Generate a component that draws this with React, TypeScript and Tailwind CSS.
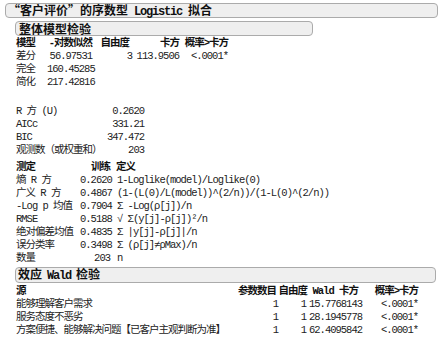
const cjk = "font-['Noto_Sans_CJK_SC',sans-serif]";

const Bar = ({ className, children }: { className: string; children: React.ReactNode }) => (
  <div
    className={`flex items-center border border-[#ababab] rounded-[4px] bg-[#efefef] text-[#111] font-bold ${className}`}
  >
    {children}
  </div>
);

const fitRows = [
  ["差分", "56.97531", "3", "113.9506", "<.0001*"],
  ["完全", "160.45285", "", "", ""],
  ["简化", "217.42816", "", "", ""],
];

const statRows = [
  ["R 方 (U)", "0.2620"],
  ["AICc", "331.21"],
  ["BIC", "347.472"],
  ["观测数（或权重和）", "203"],
];

const measureRows = [
  ["熵 R 方", "0.2620", "1-Loglike(model)/Loglike(0)"],
  ["广义 R 方", "0.4867", "(1-(L(0)/L(model))^(2/n))/(1-L(0)^(2/n))"],
  ["-Log p 均值", "0.7904", "Σ -Log(ρ[j])/n"],
  ["RMSE", "0.5188", "√ Σ(y[j]-ρ[j])²/n"],
  ["绝对偏差均值", "0.4835", "Σ |y[j]-ρ[j]|/n"],
  ["误分类率", "0.3498", "Σ (ρ[j]≠ρMax)/n"],
  ["数量", "203", "n"],
];

const waldRows = [
  ["能够理解客户需求", "1", "1", "15.7768143", "<.0001*"],
  ["服务态度不恶劣", "1", "1", "28.1945778", "<.0001*"],
  ["方案便捷、能够解决问题【已客户主观判断为准】", "1", "1", "62.4095842", "<.0001*"],
];

const head = "font-bold text-[#111]";

export default function App() {
  return (
    <div className="w-[443px] h-[344px] bg-white overflow-hidden text-[#222] font-['Liberation_Mono','Noto_Sans_CJK_SC',monospace] text-[10.5px] tracking-[-1px] leading-[13px]">
      <div className="pt-[3px] pl-[5px]">
        <Bar className="w-[433px] h-[15px] pl-[2px] tracking-normal">
          <span className={`${cjk} text-[12px] leading-[13px]`}>
            “客户评价”的序数型
            <span className="font-['Liberation_Mono'] text-[12px] tracking-[-1.2px] mx-[6px]">Logistic</span>
            拟合
          </span>
        </Bar>

        <div className="pl-[10px]">
          <Bar className={`mt-[3px] w-[298px] h-[15px] pl-[3px] ${cjk} text-[12px] tracking-normal`}>
            整体模型检验
          </Bar>

          <div className="mt-[1px] pl-[1px] grid grid-cols-[31px_45px_42px_45px_49px] whitespace-nowrap">
            <div className={head}>模型</div>
            <div className={`${head} text-right`}>-对数似然</div>
            <div className={`${head} text-right pr-[5px]`}>自由度</div>
            <div className={`${head} text-right`}>卡方</div>
            <div className={`${head} text-right`}>概率&gt;卡方</div>
            {fitRows.map((r, i) =>
              r.map((c, j) => (
                <div
                  key={`${i}-${j}`}
                  className={j === 0 ? "" : j === 2 ? "text-right pr-[2px]" : "text-right"}
                >
                  {c}
                </div>
              ))
            )}
          </div>

          <div className="mt-[16px] pl-[1px] grid grid-cols-[88px_40px] whitespace-nowrap">
            {statRows.map((r, i) => (
              <div key={i} className="contents">
                <div>{r[0]}</div>
                <div className="text-right">{r[1]}</div>
              </div>
            ))}
          </div>

          <div className="mt-[4px] pl-[1px] grid grid-cols-[64px_30px_auto] whitespace-nowrap">
            <div className={head}>测定</div>
            <div className={`${head} text-right`}>训练</div>
            <div className={`${head} pl-[6px]`}>定义</div>
            {measureRows.map((r, i) => (
              <div key={i} className="contents">
                <div>{r[0]}</div>
                <div className="text-right">{r[1]}</div>
                <div className="pl-[7px]">{r[2]}</div>
              </div>
            ))}
          </div>

          <Bar className={`mt-[2px] w-[421px] h-[16px] pl-[2px] ${cjk} text-[12px] tracking-normal`}>
            <span className="leading-[13px]">
              效应
              <span className="font-['Liberation_Mono'] tracking-[-1.2px] mx-[5px]">Wald</span>
              检验
            </span>
          </Bar>

          <div className="mt-[2px] pl-[1px] grid grid-cols-[222px_40px_31px_49px_60px] whitespace-nowrap">
            <div className={head}>源</div>
            <div className={`${head} text-right pr-[8px]`}>参数数目</div>
            <div className={`${head} text-right pr-[2px]`}>自由度</div>
            <div className={`${head} text-right`}>Wald 卡方</div>
            <div className={`${head} text-right`}>概率&gt;卡方</div>
            {waldRows.map((r, i) =>
              r.map((c, j) => (
                <div
                  key={`${i}-${j}`}
                  className={j === 0 ? "" : j === 2 ? "text-right pr-[3px]" : "text-right"}
                >
                  {c}
                </div>
              ))
            )}
          </div>
        </div>
      </div>
    </div>
  );
}
